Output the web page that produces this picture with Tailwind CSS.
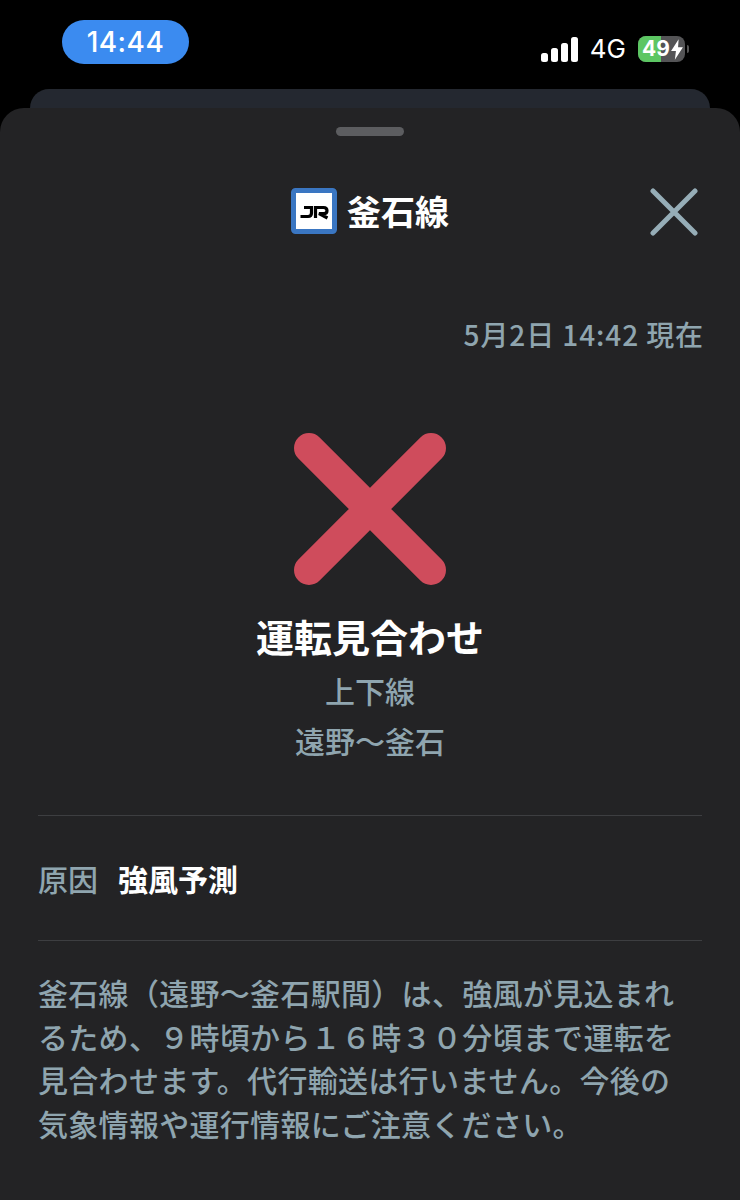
<!DOCTYPE html>
<html lang="ja">
<head>
<meta charset="utf-8">
<script src="https://cdn.jsdelivr.net/npm/@tailwindcss/browser@4"></script>
</head>
<body class="bg-black">
<div class="w-[740px] h-[1200px] overflow-hidden flex flex-col bg-black font-['Noto_Sans_CJK_JP','Noto_Sans',sans-serif]">
  <div class="h-[89px] shrink-0 flex items-start justify-between pl-[62px] pr-[51px] pt-[20px]">
    <div class="w-[127px] h-[44px] rounded-full bg-[#3b8bf0] flex items-center justify-center text-white text-[28px] font-medium font-['Inter',sans-serif] tracking-[0.5px]">14:44</div>
    <div class="flex items-center gap-[12px] mt-[15px]">
      <svg width="37" height="25" viewBox="0 0 37 25" fill="#fff"><rect x="0" y="16" width="7" height="9" rx="2.5"/><rect x="10" y="11" width="7" height="14" rx="2.5"/><rect x="20" y="6" width="7" height="19" rx="2.5"/><rect x="30" y="0" width="7" height="25" rx="2.5"/></svg>
      <span class="text-white text-[26px] leading-[28px] font-['Inter',sans-serif]">4G</span>
      <div class="flex items-center gap-[2px]">
        <div class="relative w-[47px] h-[26px] rounded-[8px] overflow-hidden flex bg-[#545456]">
          <div class="w-[23px] h-full bg-[#5cc663]"></div>
          <div class="absolute inset-0 flex items-center pl-[4px] text-white text-[21px] font-bold font-['Inter',sans-serif]">49<svg width="14" height="21" viewBox="0 0 13 19" fill="#fff"><path d="M8 0 L1 11 H5.5 L4.5 19 L12 7.5 H7.5 Z"/></svg></div>
        </div>
        <div class="w-[2px] h-[8px] rounded-r-full bg-[#555]"></div>
      </div>
    </div>
  </div>
  <div class="mx-[30px] h-[19px] shrink-0 rounded-t-[20px] bg-[#242830]"></div>
  <div class="flex-1 rounded-t-[24px] bg-[#232325] px-[38px] flex flex-col">
    <div class="self-center mt-[19px] w-[68px] h-[9px] rounded-full bg-[#5c5d60]"></div>
    <div class="relative mt-[52px] h-[46px] flex items-center justify-center gap-[10px]">
      <svg width="46" height="46" viewBox="0 0 46 46"><rect x="2.5" y="2.5" width="41" height="41" rx="2" fill="#fff" stroke="#3a76c2" stroke-width="5"/><path d="M13 19.5 H20.5 V25 Q20.5 28.5 17 28.5 H9.5" fill="none" stroke="#000" stroke-width="3.2"/><path d="M24.5 30 V19.5 H32.5 Q36 19.5 36 22.7 Q36 25.6 32.5 25.6 H28 L36.5 30" fill="none" stroke="#000" stroke-width="3.2"/></svg>
      <span class="text-white text-[34px] leading-[46px] font-bold">釜石線</span>
      <svg class="absolute right-[4px] top-0" width="48" height="48" viewBox="0 0 48 48" fill="none" stroke="#96adb7" stroke-width="5" stroke-linecap="round"><path d="M3 3 L45 45 M45 3 L3 45"/></svg>
    </div>
    <div class="mt-[80px] -mr-[2px] text-right text-[#8fa5af] text-[28px] font-medium leading-[40px] tracking-[0.9px]">5月2日 14:42 現在</div>
    <div class="mt-[79px] self-center">
      <svg class="block" width="152" height="152" viewBox="0 0 152 152" fill="none" stroke="#cf4c5c" stroke-width="30" stroke-linecap="round"><path d="M15 15 L137 137 M137 15 L15 137"/></svg>
    </div>
    <div class="mt-[23px] text-center text-white font-bold text-[38px] leading-[56px]">運転見合わせ</div>
    <div class="mt-[1px] text-center text-[#8fa5af] text-[30px] font-medium leading-[50px]">上下線</div>
    <div class="text-center text-[#8fa5af] text-[30px] font-medium leading-[50px]">遠野〜釜石</div>
    <div class="mt-[50px] border-t border-[#3d3e41]"></div>
    <div class="h-[124px] flex items-center gap-[20px] text-[30px] leading-[40px]">
      <span class="text-[#8fa5af] font-medium">原因</span>
      <span class="text-white font-bold">強風予測</span>
    </div>
    <div class="border-t border-[#3d3e41]"></div>
    <p class="mt-[30px] pr-[20px] text-[#8fa5af] text-[30px] font-medium leading-[43.6px] tracking-[0.3px]">釜石線（遠野〜釜石駅間）は、強風が見込まれるため、９時頃から１６時３０分頃まで運転を見合わせます。代行輸送は行いません。今後の気象情報や運行情報にご注意ください。</p>
  </div>
</div>
</body>
</html>
